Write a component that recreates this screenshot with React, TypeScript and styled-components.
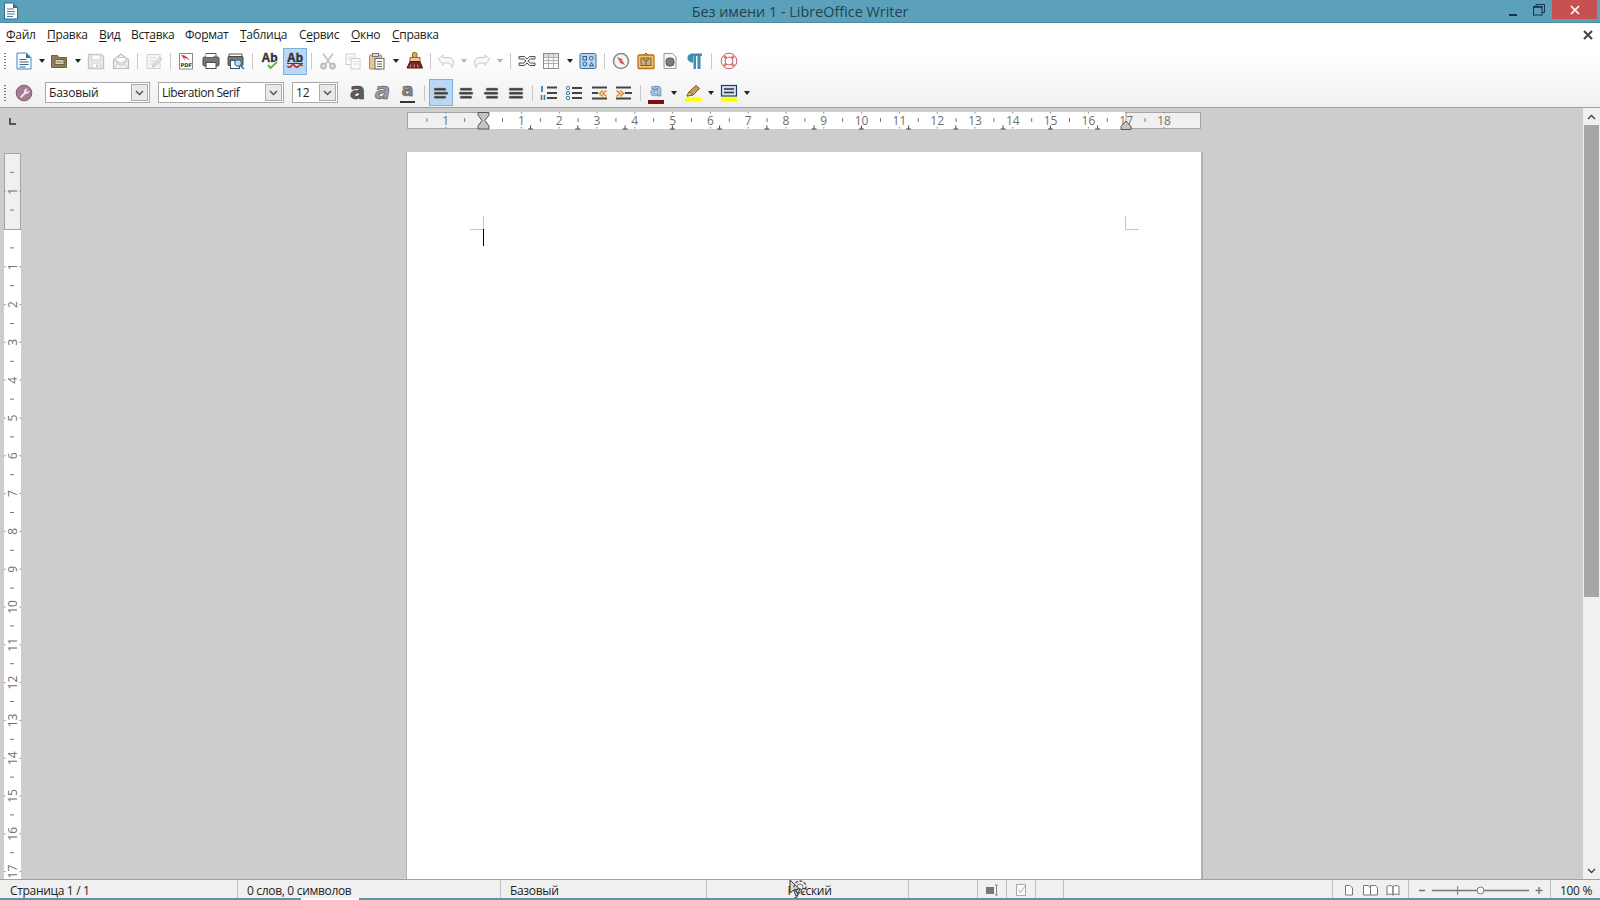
import React from "react";
import styled, { createGlobalStyle } from "styled-components";

const Global = createGlobalStyle`
  html, body { margin: 0; padding: 0; background: #cdcdcd; }
  #root { height: 900px; width: 1600px; overflow: hidden; }
  svg { display: block; }
`;

const UI_FONT = `"Open Sans", "Noto Sans", "Liberation Sans", sans-serif`;

const Shell = styled.div`
  display: flex;
  flex-direction: column;
  width: 1600px;
  height: 900px;
  overflow: hidden;
  font-family: ${UI_FONT};
  color: #222;
`;

const TitleBar = styled.header`
  display: grid;
  grid-template-columns: 1fr auto 1fr;
  align-items: start;
  height: 22px;
  background: #5ba1bb;
  border-bottom: 1px solid #4d8a9f;
`;
const AppIcon = styled.div`
  display: flex;
  padding: 2px 0 0 3px;
`;
const Title = styled.div`
  font-size: 14.4px;
  line-height: 24px;
  color: #26414d;
  white-space: nowrap;
`;
const WindowButtons = styled.div`
  display: flex;
  justify-content: flex-end;
  padding-right: 3px;
`;
const WinBtn = styled.div<{ $w: number }>`
  width: ${(p) => p.$w}px;
  height: 19px;
  display: flex;
  align-items: center;
  justify-content: center;
`;
const WinClose = styled(WinBtn)`
  background: #c75050;
`;

const Chrome = styled.div`
  background: linear-gradient(#ffffff 0%, #ffffff 35%, #f0f0f0 100%);
  border-bottom: 1px solid #a0a0a0;
`;
const MenuBar = styled.nav`
  display: flex;
  align-items: center;
  height: 24px;
  padding-left: 6px;
`;
const MenuItem = styled.span<{ $w: number }>`
  width: ${(p) => p.$w}px;
  font-size: 12px;
  line-height: 24px;
  color: #1c1c1c;
  white-space: nowrap;
  letter-spacing: -0.3px;
  u { text-underline-offset: 2px; text-decoration-thickness: 1px; }
`;
const DocClose = styled.div`
  margin-left: auto;
  width: 24px;
  display: flex;
  justify-content: center;
`;

const ToolRow = styled.div<{ $h: number; $mt: number }>`
  display: flex;
  align-items: center;
  height: ${(p) => p.$h}px;
  margin-top: ${(p) => p.$mt}px;
`;
const Grip = styled.div`
  width: 12px;
  flex: none;
  height: 16px;
  display: flex;
  justify-content: flex-start;
  padding-left: 4px;
  box-sizing: border-box;
  &::before {
    content: "";
    width: 1.5px;
    height: 100%;
    background: repeating-linear-gradient(#777 0 1px, transparent 1px 3px);
  }
`;
const Tool = styled.div<{ $w: number; $on?: boolean }>`
  flex: none;
  width: ${(p) => p.$w}px;
  height: 27px;
  box-sizing: border-box;
  display: flex;
  align-items: center;
  justify-content: center;
  background: ${(p) => (p.$on ? "#b8d8f6" : "transparent")};
  border: 1px solid ${(p) => (p.$on ? "#7db0dc" : "transparent")};
`;
const Caret = styled.div<{ $w: number; $off?: boolean }>`
  flex: none;
  width: ${(p) => p.$w}px;
  display: flex;
  justify-content: center;
  &::before {
    content: "";
    border-left: 3.5px solid transparent;
    border-right: 3.5px solid transparent;
    border-top: 4px solid ${(p) => (p.$off ? "#b5b5b5" : "#222")};
  }
`;
const Sep = styled.div<{ $w: number }>`
  flex: none;
  width: ${(p) => p.$w}px;
  height: 16px;
  display: flex;
  justify-content: center;
  &::before {
    content: "";
    width: 1px;
    height: 100%;
    background: #c8c8c8;
  }
`;
const Combo = styled.div<{ $w: number; $ml: number }>`
  flex: none;
  width: ${(p) => p.$w}px;
  margin-left: ${(p) => p.$ml}px;
  height: 21px;
  box-sizing: border-box;
  display: flex;
  align-items: center;
  background: #fff;
  border: 1px solid #a9a9a9;
  padding: 1px;
`;
const ComboText = styled.span<{ $ls: number }>`
  flex: 1;
  font-size: 12px;
  padding-left: 2px;
  color: #222;
  white-space: nowrap;
  letter-spacing: ${(p) => p.$ls}px;
`;
const ComboBtn = styled.div`
  width: 17px;
  height: 17px;
  flex: none;
  box-sizing: border-box;
  background: #e9e9e9;
  border: 1px solid #acacac;
  display: flex;
  align-items: center;
  justify-content: center;
`;

/* letter buttons: bold, italic, underline, font colour */
const Glyph = styled.span<{ $size: number; $fill: string; $edge: string; $italic?: boolean; $lift: number }>`
  display: block;
  font-family: "DejaVu Sans", sans-serif;
  font-weight: 700;
  font-style: ${(p) => (p.$italic ? "italic" : "normal")};
  font-size: ${(p) => p.$size}px;
  line-height: ${(p) => p.$size}px;
  color: ${(p) => p.$fill};
  -webkit-text-stroke: 0.5px ${(p) => p.$edge};
  transform: translateY(${(p) => p.$lift}px);
`;
const GlyphStack = styled.div`
  display: flex;
  flex-direction: column;
  align-items: center;
`;
const GlyphBar = styled.div<{ $w: number; $h: number; $c: string }>`
  width: ${(p) => p.$w}px;
  height: ${(p) => p.$h}px;
  background: ${(p) => p.$c};
  flex: none;
`;

const Workspace = styled.main`
  flex: 1;
  min-height: 0;
  display: flex;
  background: #cdcdcd;
`;
const View = styled.div`
  flex: 1;
  display: grid;
  grid-template-columns: 25px 1fr;
  grid-template-rows: 44px 1fr;
  min-width: 0;
  min-height: 0;
`;
const Corner = styled.div`
  padding: 10px 0 0 9px;
`;
const HRulerCell = styled.div`
  padding: 4px 0 0 382px;
`;
const VRulerCell = styled.div`
  padding: 1px 0 0 4px;
  overflow: hidden;
`;
const PageArea = styled.div`
  padding-left: 382px;
  overflow: hidden;
  min-height: 0;
`;
const Page = styled.div`
  position: relative;
  width: 794px;
  height: 1123px;
  background: #fff;
  box-shadow: 0 0 0 1px #b4b4b4, 1px 1px 0 1px #adadad;
`;
const CropMark = styled.div<{ $x: number; $y: number; $w: number; $h: number }>`
  position: absolute;
  left: ${(p) => p.$x}px;
  top: ${(p) => p.$y}px;
  width: ${(p) => p.$w}px;
  height: ${(p) => p.$h}px;
  background: #c4c4c4;
`;
const Caretline = styled.div`
  position: absolute;
  left: 76px;
  top: 77px;
  width: 1px;
  height: 17px;
  background: #000;
`;
const RulerNum = styled.text`
  font-family: ${UI_FONT};
  font-size: 12px;
  fill: #707070;
  text-anchor: middle;
`;

const Scrollbar = styled.aside`
  flex: none;
  width: 17px;
  background: #f0f0f0;
  display: flex;
  flex-direction: column;
  align-items: center;
`;
const ScrollArrow = styled.div`
  height: 17px;
  width: 100%;
  display: flex;
  align-items: center;
  justify-content: center;
  flex: none;
`;
const ScrollThumb = styled.div`
  width: 15px;
  height: 472px;
  flex: none;
  background: #a6a6a6;
`;
const ScrollFill = styled.div`
  flex: 1;
`;

const StatusBar = styled.footer`
  display: flex;
  height: 18px;
  flex: none;
  background: #f0f0f0;
  border-top: 1px solid #a0a0a0;
`;
const Cell = styled.div<{ $w: number; $center?: boolean; $pl?: number }>`
  position: relative;
  flex: none;
  box-sizing: border-box;
  width: ${(p) => p.$w}px;
  height: 18px;
  border-right: 1px solid #c0c0c0;
  display: flex;
  align-items: center;
  justify-content: ${(p) => (p.$center ? "center" : "flex-start")};
  padding-left: ${(p) => p.$pl ?? 0}px;
  padding-top: 2px;
  font-size: 12px;
  color: #222;
  white-space: nowrap;
  letter-spacing: -0.32px;
`;
const CellEnd = styled(Cell)`
  border-right: none;
`;
const Busy = styled.div`
  position: absolute;
  left: 80px;
  top: -2px;
  display: flex;
`;
const Gap = styled.div<{ $w: number }>`
  flex: none;
  width: ${(p) => p.$w}px;
`;
const BottomEdge = styled.div`
  flex: none;
  height: 2px;
  background: #5f94a8;
  padding-left: 301px;
  display: flex;
`;
const EdgeTab = styled.div`
  width: 58px;
  background: #fff;
`;

/* ---------- icons ---------- */
const Ic = ({ children, w = 18, h = 18 }: { children: React.ReactNode; w?: number; h?: number }) => (
  <svg width={w} height={h} viewBox={`0 0 ${w} ${h}`} fill="none">
    {children}
  </svg>
);

const IconWriterDoc = () => (
  <Ic w={16} h={18}>
    <path d="M1.5 1h9l4 4v12h-13z" fill="#fff" stroke="#2f6f95" />
    <path d="M10 1l5 5h-5z" fill="#2f6f95" />
    <path d="M4 7h7M4 9.5h8M4 12h8M4 14.5h6" stroke="#3f7ea3" />
  </Ic>
);
const IconNew = () => (
  <Ic w={16} h={18}>
    <path d="M1 1h9.5L15 5.5V17H1z" fill="#fdfdfd" stroke="#3f8ab8" />
    <path d="M10 1l5 5h-5z" fill="#2d7297" />
    <path d="M3.5 7.5h7M3.5 10h9M3.5 12.5h9M3.5 15h6" stroke="#2c6a90" strokeWidth="1.1" />
  </Ic>
);
const IconOpen = () => (
  <Ic>
    <path d="M1.5 3.5h6l1.5 2h7.5v10h-15z" fill="#8e7d58" stroke="#6f6043" />
    <rect x="5" y="7.5" width="9" height="5" fill="#d9d0bb" stroke="#6f6043" />
    <path d="M6.5 10h6" stroke="#8e7d58" />
  </Ic>
);
const IconSave = () => (
  <Ic>
    <path d="M1.5 2.5h13l2 2v12h-15z" fill="#ececec" stroke="#c6c6c6" strokeWidth="1.4" />
    <rect x="4.5" y="3" width="9" height="5" fill="#fafafa" stroke="#cfcfcf" />
    <rect x="5" y="11" width="8" height="5" fill="#fff" stroke="#cfcfcf" />
    <rect x="9" y="12.5" width="2" height="2.5" fill="#c6c6c6" />
  </Ic>
);
const IconMail = () => (
  <Ic>
    <path d="M1.5 8L9 2l7.5 6v8.5h-15z" fill="#f2f2f2" stroke="#bdbdbd" strokeWidth="1.2" />
    <path d="M4 8V5.5h10V8L9 11.5z" fill="#fff" stroke="#c8c8c8" />
    <path d="M2 16l5-5.5M16 16l-5-5.5M2 8.5l7 5 7-5" stroke="#c4c4c4" />
  </Ic>
);
const IconEdit = () => (
  <Ic>
    <rect x="2" y="2.5" width="13" height="14" fill="#f6f6f6" stroke="#d2d2d2" />
    <path d="M4.5 6h6M4.5 9h5M4.5 12h4" stroke="#d8d8d8" />
    <path d="M8 12.5l7-7.5 2 2-7 7.5-2.5.5z" fill="#e0e0e0" stroke="#c8c8c8" />
  </Ic>
);
const PdfLabel = styled.text`
  font-family: "DejaVu Sans", sans-serif;
  font-size: 5.2px;
  font-weight: 700;
  fill: #333;
`;
const IconPdf = () => (
  <Ic>
    <rect x="2.5" y="1.5" width="13" height="15.5" fill="#fff" stroke="#8a8a8a" />
    <path d="M4 3c3 0 6 1 9 6-3-3-5-3-6-3 1 1 1 2 1 3-1-2-2-4-4-6z" fill="#d23b32" />
    <PdfLabel x="3.4" y="15.2">PDF</PdfLabel>
  </Ic>
);
const IconPrint = () => (
  <Ic>
    <path d="M4 1.5h10v5H4z" fill="#fff" stroke="#555" />
    <rect x="1" y="5" width="16" height="9" rx="1.5" fill="#777" stroke="#4a4a4a" />
    <rect x="4" y="2" width="7" height="3" fill="#fff" />
    <rect x="4" y="10.5" width="10" height="6" fill="#fff" stroke="#4a4a4a" />
  </Ic>
);
const IconPreview = () => (
  <Ic>
    <path d="M2 2h13v3H2z" fill="#fff" stroke="#555" />
    <rect x="1" y="4.5" width="15" height="9" rx="1" fill="#777" stroke="#4a4a4a" />
    <rect x="3.5" y="8.5" width="9" height="8" fill="#fff" stroke="#4a4a4a" />
    <circle cx="11" cy="11" r="3.2" fill="#bcdcf0" stroke="#3a7ba8" strokeWidth="1.2" />
    <path d="M13.5 13.5l3.5 3.5" stroke="#2c6a90" strokeWidth="1.6" />
  </Ic>
);
const AbLabel = styled.text`
  font-family: "Liberation Sans", sans-serif;
  font-size: 12px;
  font-weight: 700;
  fill: #333;
  stroke: #333;
  stroke-width: 0.4px;
`;
const IconSpell = () => (
  <Ic>
    <AbLabel x="0.5" y="10">Ab</AbLabel>
    <path d="M7 13l2.500 3L16 10" stroke="#fff" strokeWidth="3.400" />
    <path d="M7 13l2.500 3L16 10" stroke="#6fb13d" strokeWidth="2" />
  </Ic>
);
const IconAutoSpell = () => (
  <Ic>
    <AbLabel x="1" y="10">Ab</AbLabel>
    <path d="M1 11.500h16" stroke="#444" />
    <path d="M1.500 14q1.900 2.600 3.750 0t3.750 0 3.750 0 3.750 0" stroke="#c12f2f" strokeWidth="1.800" />
  </Ic>
);
const IconCut = () => (
  <Ic>
    <path d="M4 1.5l7 10M14 1.5l-7 10" stroke="#c6c6c6" strokeWidth="1.8" />
    <circle cx="4.5" cy="14" r="2.6" stroke="#b4b4b4" strokeWidth="1.5" fill="#ddd" />
    <circle cx="13.5" cy="14" r="2.6" stroke="#b4b4b4" strokeWidth="1.5" fill="#ddd" />
  </Ic>
);
const IconCopy = () => (
  <Ic>
    <rect x="2" y="2" width="9" height="10.5" fill="#fbfbfb" stroke="#d0d0d0" />
    <rect x="7" y="6.5" width="9" height="10.5" fill="#fbfbfb" stroke="#d0d0d0" />
    <path d="M4 5h5M4 7.5h2M9 9.5h5M9 12h5" stroke="#dedede" />
  </Ic>
);
const IconPaste = () => (
  <Ic>
    <rect x="1.5" y="3" width="12" height="14" rx="1" fill="#e7c58e" stroke="#a98a52" />
    <rect x="4.5" y="1.5" width="6" height="3" fill="#ddd" stroke="#777" />
    <rect x="7" y="6.5" width="9" height="10.5" fill="#fff" stroke="#666" />
    <path d="M9 9.5h5M9 12h5M9 14.5h5" stroke="#666" />
  </Ic>
);
const IconClone = () => (
  <Ic>
    <rect x="6.5" y="0.5" width="4.500" height="5" rx="1.500" fill="#dca94e" stroke="#8c6c2c" />
    <path d="M4 5.500h10v4H4z" fill="#e9cd96" stroke="#8c6c2c" />
    <path d="M4 9.500h10l2.500 6.500H1z" fill="#7c2323" stroke="#5e1818" />
    <path d="M4 15.500l1-3M8 15.500l.5-3M12 15.500l-.5-3" stroke="#c99" />
  </Ic>
);
const IconUndo = ({ flip }: { flip?: boolean }) => (
  <Ic>
    <g transform={flip ? "matrix(-1 0 0 1 18 0)" : undefined}>
      <path d="M1.5 7L6 3v2.5h5C15 5.5 16.5 8 16.5 11c0 2-1 3.5-2 4.5.3-3-1-4.5-3.5-4.5H6v2.500z" fill="#f7f7f7" stroke="#c8c8c8" />
    </g>
  </Ic>
);
const IconLink = () => (
  <Ic>
    <path d="M1 4.500h5.500L9 7l2.500-2.500H17v2.500h-4.500L10 9l2.500 2h4.500v2.500h-5.500L9 11l-2.500 2.500H1V11h4.500L8 9 5.500 7H1z" fill="#ececec" stroke="#555" />
  </Ic>
);
const IconTable = () => (
  <Ic>
    <rect x="1.5" y="1.500" width="15" height="15" fill="#fbfbfb" stroke="#8c8c8c" />
    <rect x="2" y="2" width="14" height="3" fill="#dedede" />
    <path d="M6.500 2v14M11.500 2v14M2 5.500h14M2 8.500h14M2 11.500h14" stroke="#b0b0b0" />
  </Ic>
);
const IconFields = () => (
  <Ic>
    <rect x="1" y="1.500" width="16" height="15" rx="1.500" fill="#bcd6f0" stroke="#3a6ea8" />
    <rect x="4" y="4.500" width="3.500" height="3.500" stroke="#2d5c92" />
    <circle cx="12.300" cy="6.200" r="1.900" stroke="#2d5c92" />
    <circle cx="5.800" cy="12" r="1.900" stroke="#2d5c92" />
    <path d="M10.500 14h4l-2-3.500z" stroke="#2d5c92" />
  </Ic>
);
const IconCompass = () => (
  <Ic>
    <circle cx="9" cy="9" r="7.500" fill="#f4f4f4" stroke="#8b8b8b" strokeWidth="1.600" />
    <path d="M5 5l5.500 2.500L9 9z" fill="#3a6ea8" />
    <path d="M13 13L7.500 10.500 9 9z" fill="#d33" />
    <path d="M5 5l3 5.500L13 13l-3-5.500z" fill="#d25050" opacity=".7" />
  </Ic>
);
const IconGallery = () => (
  <Ic>
    <rect x="1" y="3" width="16" height="13.500" rx="1" fill="#f0c46e" stroke="#b5731b" strokeWidth="1.300" />
    <rect x="4" y="6" width="10" height="7.500" fill="#c8b07e" stroke="#8a5e1e" />
    <path d="M9 13V8M6 7l3 2 3-2" stroke="#6e5a3a" />
    <path d="M7 3l2-2 2 2" stroke="#8a5e1e" />
  </Ic>
);
const IconMedia = () => (
  <Ic>
    <path d="M3 1.500h8.500l3.500 3.500v11.500H3z" fill="#f8f8f8" stroke="#9a9a9a" />
    <rect x="5" y="6" width="8" height="8" rx="3" fill="#7b7b7b" stroke="#5a5a5a" />
  </Ic>
);
const IconPilcrow = () => (
  <Ic>
    <path d="M7 1.500h9v2.500h-1.500v13h-3V4H10v13H7.500V10.500C3.500 10.500 1.500 8.500 1.500 6S3.500 1.500 7 1.500z" fill="#3f8fae" />
    <path d="M11.500 4v13M7.500 4v6" stroke="#8cc5da" />
  </Ic>
);
const IconHelp = () => (
  <Ic>
    <circle cx="9" cy="9" r="6" stroke="#fff" strokeWidth="4" />
    <circle cx="9" cy="9" r="7.800" stroke="#c9605c" strokeWidth="1" />
    <circle cx="9" cy="9" r="4" stroke="#c9605c" strokeWidth="1" fill="#fff" />
    <path d="M4 4l2.500 2.500M14 4l-2.500 2.500M4 14l2.500-2.500M14 14l-2.500-2.500" stroke="#dc7a76" strokeWidth="2.800" />
  </Ic>
);
const IconStyles = () => (
  <Ic>
    <circle cx="9" cy="9" r="7.800" fill="#a87d94" stroke="#86586f" />
    <path d="M12.500 4.500a3 3 0 0 0-3.300 4L5 12.800 6.400 14l4.200-4.300a3 3 0 0 0 3.800-3.500L12.500 8 11 7z" fill="#f3e9ee" />
  </Ic>
);
const IconBold = () => <Glyph $size={23} $fill="#5c5c5c" $edge="#2f2f2f" $lift={-1}>a</Glyph>;
const IconItalic = () => <Glyph $size={23} $italic $fill="#9a9a9a" $edge="#444" $lift={-1}>a</Glyph>;
const IconUnder = () => (
  <GlyphStack>
    <Glyph $size={18} $fill="#888" $edge="#3a3a3a" $lift={-2}>a</Glyph>
    <GlyphBar $w={15} $h={2} $c="#333" />
  </GlyphStack>
);
const Bars = ({ rows }: { rows: [number, number][] }) => (
  <Ic>
    {rows.map(([x, w], i) => (
      <rect key={i} x={x} y={4 + i * 4} width={w} height={2.4} rx={1} fill="#3c3c3c" stroke="#9a9a9a" strokeWidth={0.5} />
    ))}
  </Ic>
);
const IconNumList = () => (
  <Ic>
    <path d="M2 2v6" stroke="#3f7ea3" strokeWidth="1.800" />
    <path d="M1.500 11v5M4.500 11v5" stroke="#3f7ea3" strokeWidth="1.600" />
    <path d="M7 3.500h10M7 9h10M7 14h10" stroke="#444" strokeWidth="2.200" />
  </Ic>
);
const IconBullets = () => (
  <Ic>
    <circle cx="3" cy="4" r="1.700" stroke="#3f7ea3" />
    <circle cx="3" cy="9" r="1.700" stroke="#3f7ea3" />
    <circle cx="3" cy="14" r="1.700" stroke="#3f7ea3" />
    <path d="M7 4h10M7 9h10M7 14h10" stroke="#444" strokeWidth="2.200" />
  </Ic>
);
const IconOutdent = () => (
  <Ic>
    <path d="M2 3.500h15M2 9h6M2 14.500h15" stroke="#444" strokeWidth="2" />
    <path d="M13 6.500L9.500 9.500l3.500 3M16.500 6.500L13 9.500l3.500 3" stroke="#e2892c" strokeWidth="1.600" />
  </Ic>
);
const IconIndent = () => (
  <Ic>
    <path d="M1 3.500h15M10 9h7M1 14.500h15" stroke="#444" strokeWidth="2" />
    <path d="M1.500 6.500L5 9.500l-3.500 3M5 6.500l3.500 3-3.500 3" stroke="#e2892c" strokeWidth="1.600" />
  </Ic>
);
const IconFontColor = () => (
  <GlyphStack>
    <Glyph $size={18} $fill="#a9c6e6" $edge="#2a5d9a" $lift={-1}>a</Glyph>
    <GlyphBar $w={16} $h={4} $c="#7d0f14" />
  </GlyphStack>
);
const IconHighlight = () => (
  <Ic>
    <path d="M3 12l2-4 7-6.500 3.500 3L9 11z" fill="#c39a5a" stroke="#7a5a2a" />
    <path d="M3 12l2-4 3.500 3z" fill="#f0d9a8" stroke="#7a5a2a" />
    <rect x="1" y="13.500" width="16" height="4" fill="#ffff00" />
  </Ic>
);
const IconParaBg = () => (
  <Ic>
    <rect x="1.500" y="1.500" width="15" height="10.500" fill="#cfe2f4" stroke="#1f3f6a" strokeWidth="1.200" />
    <path d="M4 5h10M4 8.500h10" stroke="#333" strokeWidth="1.700" />
    <rect x="1" y="13.500" width="16" height="4" fill="#ffff00" />
  </Ic>
);
const Chevron = () => (
  <svg width="9" height="6" viewBox="0 0 9 6" fill="none">
    <path d="M1 1l3.500 3.500L8 1" stroke="#555" strokeWidth="1.500" />
  </svg>
);

/* ---------- rulers ---------- */
const CM = 37.8;
const HORIGIN = 76.6;

const HRuler = () => {
  const numbers = [-1, ...Array.from({ length: 18 }, (_, i) => i + 1)];
  const halves = Array.from({ length: 20 }, (_, i) => HORIGIN - 1.5 * CM + i * CM);
  const tabs = Array.from({ length: 13 }, (_, i) => 123.6 + i * 47.25);
  return (
    <svg width="795" height="19" viewBox="0 0 795 19" fill="none">
      <rect x="0" y="0" width="794" height="17" fill="#fff" />
      <rect x="0.500" y="0.500" width={HORIGIN} height="16" fill="#f0f0f0" stroke="#a6a6a6" />
      <rect x="719" y="0.500" width="74.500" height="16" fill="#f0f0f0" stroke="#a6a6a6" />
      {halves.map((x) => (
        <path key={x} d={`M${x} 6v4`} stroke="#777" />
      ))}
      {numbers.map((n) => {
        const x = HORIGIN + n * CM;
        return (
          <g key={n}>
            <path d={`M${x} 0v1.500M${x} 15v1.500`} stroke="#888" />
            <RulerNum x={x} y="12.500">{Math.abs(n)}</RulerNum>
          </g>
        );
      })}
      {tabs.map((x) => (
        <path key={x} d={`M${x} 13.500v3.500M${x - 2.500} 17h5`} stroke="#444" />
      ))}
      <path d="M71 0.500h11v2.500l-4 5.500 4 5.500v3h-11v-3l4-5.500-4-5.500z" fill="#c4c4c4" stroke="#555" />
      <path d="M714 17.500v-3l5-5.500 5 5.500v3z" fill="#c4c4c4" stroke="#555" />
    </svg>
  );
};

const VOrigin = 76;
const VRuler = () => {
  const numbers = [-1, ...Array.from({ length: 17 }, (_, i) => i + 1)];
  const halves = Array.from({ length: 19 }, (_, i) => VOrigin - 1.5 * CM + i * CM);
  return (
    <svg width="17" height="726" viewBox="0 0 17 726" fill="none">
      <rect x="0" y={VOrigin} width="17" height="650" fill="#fff" />
      <rect x="0.500" y="0.500" width="16" height={VOrigin} fill="#f0f0f0" stroke="#a6a6a6" />
      {halves.map((y) => (
        <path key={y} d={`M6 ${y}h4`} stroke="#777" />
      ))}
      {numbers.map((n) => {
        const y = VOrigin + n * CM;
        return (
          <g key={n}>
            <path d={`M0 ${y}h1.500M15.500 ${y}h1.500`} stroke="#888" />
            <RulerNum x="0" y="0" transform={`translate(12.500 ${y}) rotate(-90)`}>
              {Math.abs(n)}
            </RulerNum>
          </g>
        );
      })}
    </svg>
  );
};

/* ---------- toolbar data ---------- */
type Item =
  | { t: "tool"; w: number; icon: React.ReactNode; on?: boolean }
  | { t: "caret"; w: number; off?: boolean }
  | { t: "sep"; w: number };

const tool = (w: number, icon: React.ReactNode, on?: boolean): Item => ({ t: "tool", w, icon, on });
const caret = (w: number, off?: boolean): Item => ({ t: "caret", w, off });
const sep = (w: number): Item => ({ t: "sep", w });

const row1: Item[] = [
  tool(24, <IconNew />), caret(11),
  tool(24, <IconOpen />), caret(13),
  tool(24, <IconSave />), tool(25, <IconMail />), sep(8),
  tool(25, <IconEdit />), sep(8),
  tool(24, <IconPdf />), tool(25, <IconPrint />), tool(25, <IconPreview />), sep(9),
  tool(26, <IconSpell />), tool(24, <IconAutoSpell />, true), sep(8),
  tool(25, <IconCut />), tool(25, <IconCopy />), tool(24, <IconPaste />), caret(14),
  tool(24, <IconClone />), sep(7),
  tool(24, <IconUndo />), caret(12, true), tool(24, <IconUndo flip />), caret(12, true), sep(8),
  tool(25, <IconLink />), tool(24, <IconTable />), caret(13),
  tool(24, <IconFields />), sep(8),
  tool(25, <IconCompass />), tool(25, <IconGallery />), tool(24, <IconMedia />), tool(25, <IconPilcrow />), sep(9),
  tool(25, <IconHelp />),
];

const row2: Item[] = [
  tool(25, <IconBold />), tool(25, <IconItalic />), tool(25, <IconUnder />), sep(9),
  tool(24, <Bars rows={[[2, 12], [2, 14], [2, 12]]} />, true),
  tool(25, <Bars rows={[[3, 12], [2, 14], [3, 12]]} />),
  tool(25, <Bars rows={[[4, 12], [2, 14], [4, 12]]} />),
  tool(25, <Bars rows={[[2, 14], [2, 14], [2, 14]]} />), sep(8),
  tool(25, <IconNumList />), tool(25, <IconBullets />), tool(25, <IconOutdent />), tool(25, <IconIndent />), sep(8),
  tool(24, <IconFontColor />), caret(12),
  tool(25, <IconHighlight />), caret(11),
  tool(25, <IconParaBg />), caret(11),
];

const renderItems = (items: Item[]) =>
  items.map((it, i) => {
    if (it.t === "tool") return <Tool key={i} $w={it.w} $on={it.on}>{it.icon}</Tool>;
    if (it.t === "caret") return <Caret key={i} $w={it.w} $off={it.off} />;
    return <Sep key={i} $w={it.w} />;
  });

const menu: [string, string, string, number][] = [
  ["", "Ф", "айл", 41],
  ["", "П", "равка", 52],
  ["", "В", "ид", 32],
  ["Вст", "а", "вка", 54],
  ["Фо", "р", "мат", 55],
  ["", "Т", "аблица", 59],
  ["С", "е", "рвис", 52],
  ["", "О", "кно", 41],
  ["", "С", "правка", 60],
];

export default function App() {
  return (
    <Shell>
      <Global />
      <TitleBar>
        <AppIcon><IconWriterDoc /></AppIcon>
        <Title>Без имени 1 - LibreOffice Writer</Title>
        <WindowButtons>
          <WinBtn $w={26}>
            <svg width="10" height="12" viewBox="0 0 10 12"><rect x="1" y="10" width="8" height="2" fill="#15334a" /></svg>
          </WinBtn>
          <WinBtn $w={26}>
            <svg width="12" height="12" viewBox="0 0 12 12" fill="none">
              <path d="M3 2.500V.500h8.500v8H9" stroke="#15334a" />
              <rect x=".5" y="2.500" width="8.500" height="8.500" stroke="#15334a" strokeWidth="1" />
              <rect x="0" y="2" width="9.500" height="1.800" fill="#15334a" />
            </svg>
          </WinBtn>
          <WinClose $w={45}>
            <svg width="10" height="10" viewBox="0 0 10 10"><path d="M1 1l8 8M9 1L1 9" stroke="#fff" strokeWidth="1.700" /></svg>
          </WinClose>
        </WindowButtons>
      </TitleBar>

      <Chrome>
        <MenuBar>
          {menu.map(([a, u, b, w]) => (
            <MenuItem key={a + u + b} $w={w}>{a}<u>{u}</u>{b}</MenuItem>
          ))}
          <DocClose>
            <svg width="10" height="10" viewBox="0 0 10 10"><path d="M1 1l8 8M9 1L1 9" stroke="#444" strokeWidth="2" /></svg>
          </DocClose>
        </MenuBar>
        <ToolRow $h={28} $mt={0}>
          <Grip />
          {renderItems(row1)}
        </ToolRow>
        <ToolRow $h={29} $mt={3}>
          <Grip />
          <Tool $w={24}><IconStyles /></Tool>
          <Combo $w={105} $ml={9}><ComboText $ls={-0.2}>Базовый</ComboText><ComboBtn><Chevron /></ComboBtn></Combo>
          <Combo $w={126} $ml={8}><ComboText $ls={-0.5}>Liberation Serif</ComboText><ComboBtn><Chevron /></ComboBtn></Combo>
          <Combo $w={46} $ml={8}><ComboText $ls={0}>12</ComboText><ComboBtn><Chevron /></ComboBtn></Combo>
          <Gap $w={7} />
          {renderItems(row2)}
        </ToolRow>
      </Chrome>

      <Workspace>
        <View>
          <Corner>
            <svg width="8" height="8" viewBox="0 0 8 8"><path d="M0 0h2v5h5v2H0z" fill="#555" /></svg>
          </Corner>
          <HRulerCell><HRuler /></HRulerCell>
          <VRulerCell><VRuler /></VRulerCell>
          <PageArea>
            <Page>
              <CropMark $x={76} $y={64} $w={1} $h={13} />
              <CropMark $x={63} $y={77} $w={13} $h={1} />
              <Caretline />
              <CropMark $x={718} $y={64} $w={1} $h={13} />
              <CropMark $x={718} $y={77} $w={14} $h={1} />
            </Page>
          </PageArea>
        </View>
        <Scrollbar>
          <ScrollArrow>
            <svg width="9" height="6" viewBox="0 0 9 6" fill="none"><path d="M1 5l3.500-3.500L8 5" stroke="#444" strokeWidth="1.400" /></svg>
          </ScrollArrow>
          <ScrollThumb />
          <ScrollFill />
          <ScrollArrow>
            <svg width="9" height="6" viewBox="0 0 9 6" fill="none"><path d="M1 1l3.500 3.500L8 1" stroke="#444" strokeWidth="1.400" /></svg>
          </ScrollArrow>
        </Scrollbar>
      </Workspace>

      <StatusBar>
        <Cell $w={238} $pl={10}>Страница 1 / 1</Cell>
        <Cell $w={263} $pl={9}>0 слов, 0 символов</Cell>
        <Cell $w={206} $pl={9}>Базовый</Cell>
        <Cell $w={202} $center $pl={4}>
          Русский
          <Busy>
            <svg width="24" height="20" viewBox="0 0 24 20" fill="none">
              <path d="M3 2l0 13 3.500-3 2.500 6 2-1-2.500-5.500H13z" fill="#ddd" stroke="#333" />
              <circle cx="13" cy="9" r="6" stroke="#555" strokeWidth="1.400" strokeDasharray="3 1.500" />
              <circle cx="13" cy="9" r="3" stroke="#777" />
            </svg>
          </Busy>
        </Cell>
        <Cell $w={69} />
        <Cell $w={29} $center>
          <svg width="14" height="14" viewBox="0 0 14 14" fill="none">
            <rect x="1" y="4" width="8" height="7" fill="#777" />
            <path d="M11.500 2v10M10 2h3M10 12h3" stroke="#888" />
          </svg>
        </Cell>
        <Cell $w={29} $center>
          <svg width="12" height="14" viewBox="0 0 12 14" fill="none">
            <rect x="1.500" y="1.500" width="9" height="11" fill="#fafafa" stroke="#aaa" />
            <path d="M3.500 7l2 2.500L10 3" stroke="#aaa" />
          </svg>
        </Cell>
        <Cell $w={28} />
        <Cell $w={269} />
        <Cell $w={76} $center>
          <svg width="68" height="14" viewBox="0 0 68 14" fill="none" stroke="#777">
            <path d="M8.500 2.500h4.500l2.500 2.500v7h-7z" fill="#fff" />
            <path d="M26.500 2.500h5l2 2.500v7h-7zM33.500 2.500h5l2 2.500v7h-7z" fill="#fff" />
            <path d="M50 3.500c2-1.500 4-1 6 0v8.500c-2-1-4-1.500-6 0zM56 3.500c2-1 4-1.500 6 0v8.500c-2-1.500-4-1-6 0z" fill="#fff" />
          </svg>
        </Cell>
        <Cell $w={142} $pl={8}>
          <svg width="134" height="14" viewBox="0 0 134 14" fill="none">
            <path d="M2 7.500h6" stroke="#777" strokeWidth="1.600" />
            <path d="M15 7.500h98" stroke="#777" strokeWidth="1.400" />
            <path d="M41 3v9" stroke="#777" />
            <circle cx="64" cy="7.500" r="3.500" fill="#f8f8f8" stroke="#777" />
            <path d="M119.500 7.500h7M123 4v7" stroke="#777" strokeWidth="1.400" />
          </svg>
        </Cell>
        <CellEnd $w={49} $pl={9}>100 %</CellEnd>
      </StatusBar>
      <BottomEdge><EdgeTab /></BottomEdge>
    </Shell>
  );
}
